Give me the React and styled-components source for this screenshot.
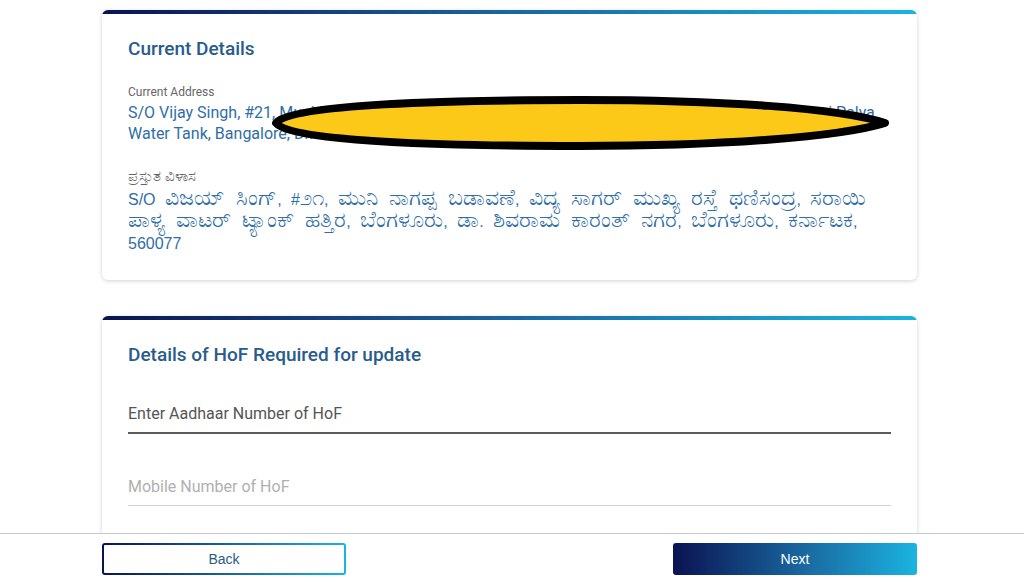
import React from "react";
import styled, { createGlobalStyle } from "styled-components";

const GlobalStyle = createGlobalStyle`
    html, body {
        margin: 0;
        padding: 0;
        background: #ffffff;
        font-family: Roboto, "Noto Sans", sans-serif;
    }
`

const Page = styled.div`
    display: flex;
    flex-direction: column;
    height: 100vh;
    overflow: hidden;
`
const Scroll = styled.main`
    flex: 1;
    overflow: hidden;
    padding-top: 10px;
`
const Wrapper = styled.div`
    width: 815px;
    margin-left: 102px;
    display: flex;
    flex-direction: column;
    gap: 36px;
`
const Card = styled.section`
    background: #fff;
    border-radius: 6px;
    overflow: hidden;
    box-shadow: 0 1px 4px rgba(0, 0, 0, 0.18);
    padding: 0 26px 25px;
`
const TopBar = styled.div`
    height: 4px;
    margin: 0 -26px;
    background: linear-gradient(90deg, #0a1352 0%, #1a5e98 45%, #1ab4e0 100%);
`
const Title = styled.h2`
    margin: 23px 0 0;
    font-size: 19px;
    line-height: 24px;
    font-weight: 500;
    color: #285c8c;
`
const Label = styled.div`
    margin-top: ${p => p.$top}px;
    font-size: ${p => (p.$kn ? 15 : 12)}px;
    line-height: 16px;
    color: #666;
    font-family: ${p => (p.$kn ? '"Liberation Sans", Arial, sans-serif' : 'Roboto, sans-serif')};
`
const Address = styled.div`
    position: relative;
    margin-top: ${p => (p.$kn ? 5 : 2)}px;
    font-size: 16px;
    line-height: ${p => p.$lh}px;
    color: #2f6ea6;
    font-family: ${p => (p.$kn ? '"Liberation Sans", Arial, sans-serif' : 'Roboto, sans-serif')};
    word-spacing: ${p => (p.$kn ? 5 : 0)}px;
`
const Kn = styled.span`
    font-size: 22px;
    line-height: 16px;
`
const Redact = styled.svg`
    position: absolute;
    left: 140px;
    top: -8px;
    width: 625px;
    height: 59px;
    overflow: visible;
`
const Field = styled.div`
    margin-top: ${p => p.$top}px;
    padding-bottom: 6px;
    border-bottom: ${p => (p.$active ? "2px solid #5a5a5a" : "1.5px solid #d2d2d2")};
    font-size: 16px;
    line-height: 24px;
    color: ${p => (p.$active ? "#555" : "#b0b0b0")};
`
const Footer = styled.footer`
    flex: none;
    height: 51px;
    border-top: 1px solid #c3c9ce;
    background: #fff;
    padding-top: 9px;
    box-sizing: border-box;
`
const FooterRow = styled.div`
    width: 815px;
    margin-left: 102px;
    display: flex;
    justify-content: space-between;
`
const Button = styled.button`
    width: 244px;
    height: 32px;
    border-radius: 3px;
    font-family: "Liberation Sans", Arial, sans-serif;
    font-size: 14px;
    cursor: pointer;
    box-sizing: border-box;
    border: ${p => (p.$primary ? "none" : "2px solid transparent")};
    color: ${p => (p.$primary ? "#fff" : "#2b5a86")};
    background: ${p => p.$primary
        ? "linear-gradient(90deg, #0a1352 0%, #1a6aa2 55%, #1ab4e0 100%)"
        : "linear-gradient(#fff, #fff) padding-box, linear-gradient(90deg, #0a1352, #1a6aa2 55%, #1ab4e0) border-box"};
`

export default function App() {
    return (
        <Page>
            <GlobalStyle />
            <Scroll>
                <Wrapper>
                    <Card>
                        <TopBar />
                        <Title>Current Details</Title>
                        <Label $top={23}>Current Address</Label>
                        <Address $lh={21}>
                            S/O Vijay Singh, #21, Muni Nagappa Badavane, Vidya Sagar Main Road, Near Thanisandra Rd., Sarai Palya
                            <br />
                            Water Tank, Bangalore, Dr. Shivarama Karanth Nagar, Bangalore, Karnataka, 560077
                            <Redact viewBox="268 93 625 59">
                                <path
                                    d="M276,122 C290,103 450,99 580,99 C720,99 840,107 885,122 C840,136 720,145 580,145 C450,145 290,141 276,122 Z"
                                    fill="#fdc918"
                                    stroke="#000"
                                    strokeWidth="8"
                                    strokeLinejoin="round"
                                />
                            </Redact>
                        </Address>
                        <Label $top={24} $kn>ಪ್ರಸ್ತುತ ವಿಳಾಸ</Label>
                        <Address $lh={22} $kn>
                            S/O <Kn>ವಿಜಯ್ ಸಿಂಗ್</Kn>, #<Kn>೨೧</Kn>, <Kn>ಮುನಿ ನಾಗಪ್ಪ ಬಡಾವಣೆ</Kn>, <Kn>ವಿದ್ಯ ಸಾಗರ್ ಮುಖ್ಯ ರಸ್ತೆ ಥಣಿಸಂದ್ರ</Kn>, <Kn>ಸರಾಯಿ</Kn>
                            <br />
                            <Kn>ಪಾಳ್ಯ ವಾಟರ್ ಟ್ಯಾಂಕ್ ಹತ್ತಿರ</Kn>, <Kn>ಬೆಂಗಳೂರು</Kn>, <Kn>ಡಾ</Kn>. <Kn>ಶಿವರಾಮ ಕಾರಂತ್ ನಗರ</Kn>, <Kn>ಬೆಂಗಳೂರು</Kn>, <Kn>ಕರ್ನಾಟಕ</Kn>,
                            <br />
                            560077
                        </Address>
                    </Card>
                    <Card>
                        <TopBar />
                        <Title>Details of HoF Required for update</Title>
                        <Field $top={35} $active>Enter Aadhaar Number of HoF</Field>
                        <Field $top={41}>Mobile Number of HoF</Field>
                        <Field $top={41}>&nbsp;</Field>
                    </Card>
                </Wrapper>
            </Scroll>
            <Footer>
                <FooterRow>
                    <Button>Back</Button>
                    <Button $primary>Next</Button>
                </FooterRow>
            </Footer>
        </Page>
    )
}
